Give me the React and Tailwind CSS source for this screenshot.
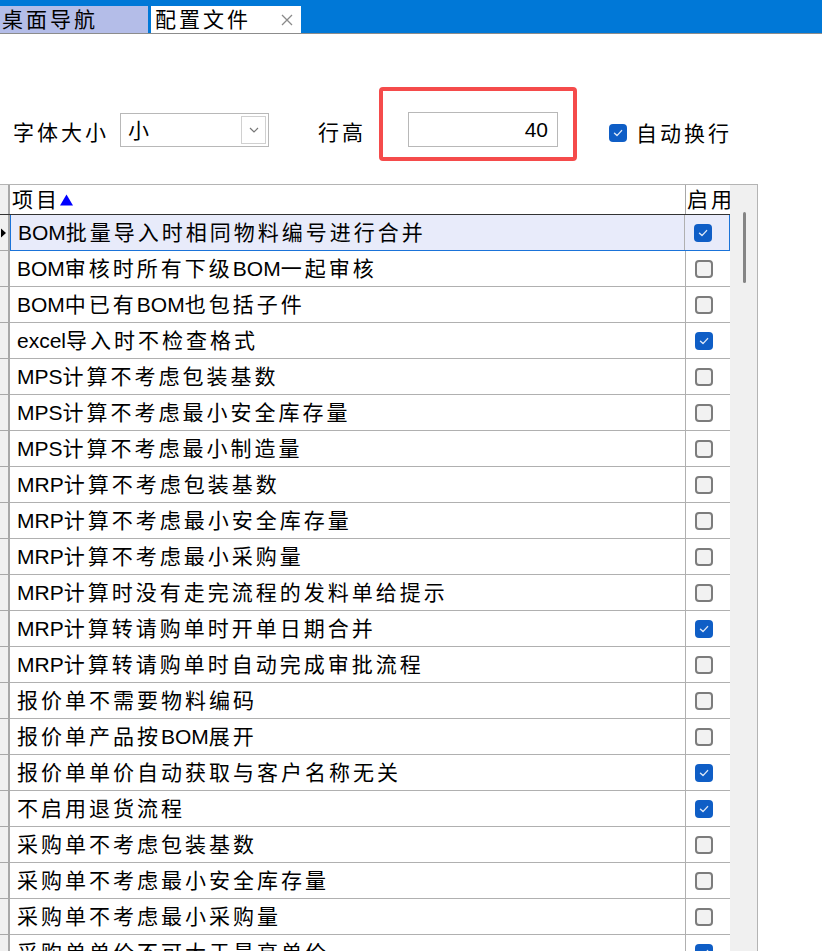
import React from "react";

const FONT = { fontFamily: '"Liberation Sans", "Noto Sans CJK SC", sans-serif' };

const rows = [
  ["BOM批量导入时相同物料编号进行合并", true],
  ["BOM审核时所有下级BOM一起审核", false],
  ["BOM中已有BOM也包括子件", false],
  ["excel导入时不检查格式", true],
  ["MPS计算不考虑包装基数", false],
  ["MPS计算不考虑最小安全库存量", false],
  ["MPS计算不考虑最小制造量", false],
  ["MRP计算不考虑包装基数", false],
  ["MRP计算不考虑最小安全库存量", false],
  ["MRP计算不考虑最小采购量", false],
  ["MRP计算时没有走完流程的发料单给提示", false],
  ["MRP计算转请购单时开单日期合并", true],
  ["MRP计算转请购单时自动完成审批流程", false],
  ["报价单不需要物料编码", false],
  ["报价单产品按BOM展开", false],
  ["报价单单价自动获取与客户名称无关", true],
  ["不启用退货流程", true],
  ["采购单不考虑包装基数", false],
  ["采购单不考虑最小安全库存量", false],
  ["采购单不考虑最小采购量", false],
  ["采购单单价不可大于最高单价", true],
];

// CJK gets extra spacing, latin runs stay tight
function T({ s }) {
  const parts = s.split(/([A-Za-z0-9]+)/).filter(Boolean);
  return (
    <>
      {parts.map((p, i) =>
        /^[A-Za-z0-9]+$/.test(p) ? (
          <span key={i}>{p}</span>
        ) : (
          <span key={i} className="tracking-[3px]">{p}</span>
        )
      )}
    </>
  );
}

function Check({ on }) {
  if (on) {
    return (
      <span className="flex items-center justify-center w-[18px] h-[18px] rounded-[4px] bg-[#0f5ec6]">
        <svg width="12" height="12" viewBox="0 0 12 12" fill="none">
          <path d="M2.5 6.3 L5 8.6 L9.6 3.6" stroke="#dfe9f8" strokeWidth="1.4" strokeLinecap="round" strokeLinejoin="round" />
        </svg>
      </span>
    );
  }
  return <span className="block w-[18px] h-[18px] rounded-[4px] border-2 border-[#7c7c7c] bg-[#f2f2f2]" />;
}

export default function App() {
  return (
    <div className="w-[822px] h-[951px] overflow-hidden bg-white text-black text-[21px]" style={FONT}>
      {/* tab strip */}
      <div className="flex items-end h-[34px] bg-[#0078d7] border-b border-[#8c8c8c]">
        <div className="flex items-center w-[148px] h-[27px] bg-[#b4bde8] pl-[2px] leading-none overflow-hidden whitespace-nowrap">
          <T s="桌面导航" />
        </div>
        <div className="flex items-center justify-between w-[150px] h-[27px] ml-[3px] bg-white pl-[4px] pr-[6px] leading-none">
          <span className="whitespace-nowrap"><T s="配置文件" /></span>
          <svg width="14" height="14" viewBox="0 0 14 14" className="mr-[1px] shrink-0">
            <path d="M2 2 L12 12 M12 2 L2 12" stroke="#8a8a8a" strokeWidth="1.3" />
          </svg>
        </div>
      </div>

      {/* toolbar */}
      <div className="flex items-start h-[150px] pl-[13px]">
        <div className="w-[107px] mt-[85px] leading-[28px] whitespace-nowrap">
          <T s="字体大小" />
        </div>
        <div className="flex items-center justify-between w-[149px] h-[34px] mt-[79px] border border-[#b8b8b8] pl-[7px] pr-[2px]">
          <span className="leading-none">小</span>
          <span className="flex items-center justify-center w-[25px] h-[28px] border border-[#d0d0d0] bg-white">
            <svg width="12" height="8" viewBox="0 0 12 8">
              <path d="M2 2 L6 6 L10 2" stroke="#777" strokeWidth="1.2" fill="none" />
            </svg>
          </span>
        </div>
        <div className="w-[61px] ml-[49px] mt-[85px] leading-[28px] whitespace-nowrap">
          <T s="行高" />
        </div>
        <div className="w-[198px] h-[74px] mt-[53px] border-[4px] border-[#f54b4b] rounded-[4px] pt-[21px] pl-[25px]">
          <div className="flex items-center justify-end w-[150px] h-[35px] border border-[#b8b8b8] pr-[9px] leading-none">
            40
          </div>
        </div>
        <div className="flex items-center ml-[32px] mt-[85px] h-[28px]">
          <Check on />
          <span className="ml-[9px] leading-none whitespace-nowrap">
            <T s="自动换行" />
          </span>
        </div>
      </div>

      {/* grid */}
      <div className="flex w-[758px] border-t border-r border-[#b4b4b4]">
        <div className="w-[730px]">
          {/* header */}
          <div className="flex h-[30px] border-b border-[#333]">
            <div className="w-[10px] bg-[#f0f0f0] border-r-2 border-[#a8a8a8]" />
            <div className="flex items-center flex-1 pl-[2px] border-r border-[#a8a8a8] leading-none">
              <T s="项目" />
              <svg width="15" height="14" viewBox="0 0 15 14" className="ml-[-1px]">
                <path d="M7.5 1.5 L14 12.5 L1 12.5 Z" fill="#0000ff" />
              </svg>
            </div>
            <div className="w-[44px] flex items-center overflow-hidden whitespace-nowrap pl-[1px] leading-none">
              <T s="启用" />
            </div>
          </div>
          {/* rows */}
          {rows.map(([label, on], i) => {
            const sel = i === 0;
            return (
              <div key={i} className="flex h-[36px]">
                <div className="flex items-center w-[10px] bg-[#f0f0f0] border-r-2 border-b border-[#a8a8a8]">
                  {sel && (
                    <svg width="7" height="12" viewBox="0 0 7 12">
                      <path d="M1 1.5 L6 6 L1 10.5 Z" fill="#000" />
                    </svg>
                  )}
                </div>
                <div
                  className={
                    sel
                      ? "flex flex-1 bg-[#e8ebfa] border border-t-0 border-[#1a73d9]"
                      : "flex flex-1 border-b border-[#b0b0b0]"
                  }
                >
                  <div className="flex items-center flex-1 pl-[7px] border-r border-[#b0b0b0] whitespace-nowrap leading-none">
                    <T s={label} />
                  </div>
                  <div className="flex items-center w-[44px] pl-[9px]">
                    <Check on={on} />
                  </div>
                </div>
              </div>
            );
          })}
        </div>
        {/* scrollbar */}
        <div className="w-[27px] bg-[#f0f0f0] pt-[27px] pl-[13px]">
          <div className="w-[3px] h-[71px] rounded-full bg-[#858585]" />
        </div>
      </div>
    </div>
  );
}
